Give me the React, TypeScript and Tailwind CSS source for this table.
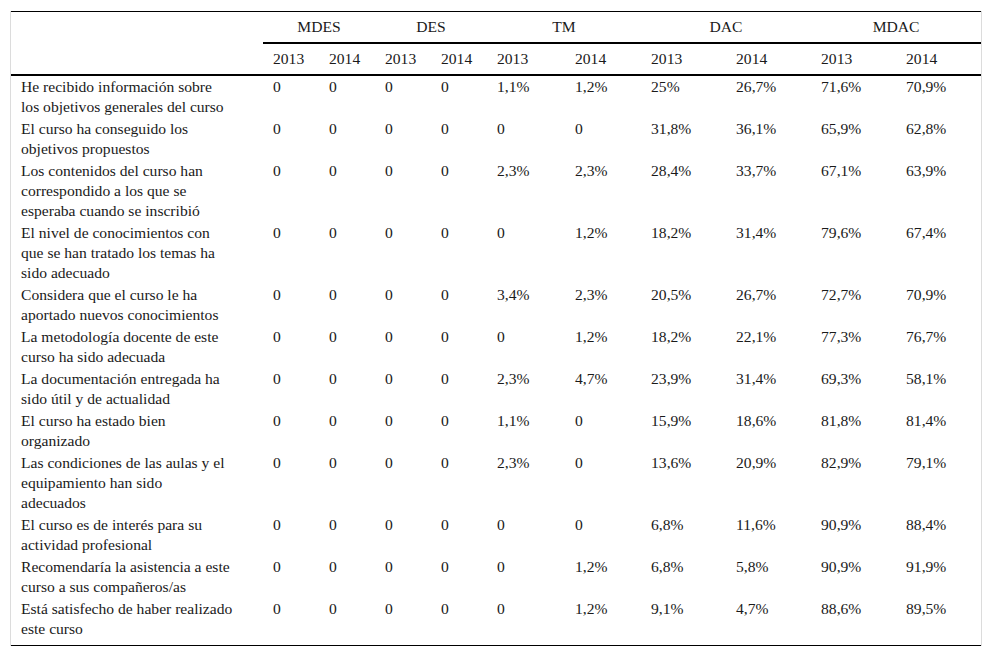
import React from "react";

const groups = ["MDES", "DES", "TM", "DAC", "MDAC"];

const rows: { label: string[]; v: string[] }[] = [
  { label: ["He recibido información sobre", "los objetivos generales del curso"], v: ["0", "0", "0", "0", "1,1%", "1,2%", "25%", "26,7%", "71,6%", "70,9%"] },
  { label: ["El curso ha conseguido los", "objetivos propuestos"], v: ["0", "0", "0", "0", "0", "0", "31,8%", "36,1%", "65,9%", "62,8%"] },
  { label: ["Los contenidos del curso han", "correspondido a los que se", "esperaba cuando se inscribió"], v: ["0", "0", "0", "0", "2,3%", "2,3%", "28,4%", "33,7%", "67,1%", "63,9%"] },
  { label: ["El nivel de conocimientos con", "que se han tratado los temas ha", "sido adecuado"], v: ["0", "0", "0", "0", "0", "1,2%", "18,2%", "31,4%", "79,6%", "67,4%"] },
  { label: ["Considera que el curso le ha", "aportado nuevos conocimientos"], v: ["0", "0", "0", "0", "3,4%", "2,3%", "20,5%", "26,7%", "72,7%", "70,9%"] },
  { label: ["La metodología docente de este", "curso ha sido adecuada"], v: ["0", "0", "0", "0", "0", "1,2%", "18,2%", "22,1%", "77,3%", "76,7%"] },
  { label: ["La documentación entregada ha", "sido útil y de actualidad"], v: ["0", "0", "0", "0", "2,3%", "4,7%", "23,9%", "31,4%", "69,3%", "58,1%"] },
  { label: ["El curso ha estado bien", "organizado"], v: ["0", "0", "0", "0", "1,1%", "0", "15,9%", "18,6%", "81,8%", "81,4%"] },
  { label: ["Las condiciones de las aulas y el", "equipamiento han sido", "adecuados"], v: ["0", "0", "0", "0", "2,3%", "0", "13,6%", "20,9%", "82,9%", "79,1%"] },
  { label: ["El curso es de interés para su", "actividad profesional"], v: ["0", "0", "0", "0", "0", "0", "6,8%", "11,6%", "90,9%", "88,4%"] },
  { label: ["Recomendaría la asistencia a este", "curso a sus compañeros/as"], v: ["0", "0", "0", "0", "0", "1,2%", "6,8%", "5,8%", "90,9%", "91,9%"] },
  { label: ["Está satisfecho de haber realizado", "este curso"], v: ["0", "0", "0", "0", "0", "1,2%", "9,1%", "4,7%", "88,6%", "89,5%"] },
];

export default function App() {
  return (
    <div className="bg-white w-[992px] h-[657px] pt-[11px] pl-[10px] text-[#1a1a1a] font-['Liberation_Serif','Times_New_Roman',serif] text-[15.6px] leading-[20px]">
      <div className="w-[972px] border-x border-[#dcdcdc]">
        <table className="w-[970px] table-fixed border-separate border-spacing-0 border-t border-black">
          <colgroup>
            <col className="w-[252px]" />
            <col className="w-[56px]" />
            <col className="w-[56px]" />
            <col className="w-[56px]" />
            <col className="w-[56px]" />
            <col className="w-[78px]" />
            <col className="w-[76px]" />
            <col className="w-[85px]" />
            <col className="w-[85px]" />
            <col className="w-[85px]" />
            <col className="w-[85px]" />
          </colgroup>
          <thead>
            <tr>
              <th rowSpan={2} className="border-b-2 border-black p-0" />
              {groups.map((g) => (
                <th key={g} colSpan={2} className="h-[32px] border-b-2 border-black font-normal text-center align-middle py-[5px] px-0">
                  {g}
                </th>
              ))}
            </tr>
            <tr>
              {groups.map((g) => (
                <React.Fragment key={g}>
                  <th className="h-[32px] border-b-2 border-black font-normal text-left pl-[10px] py-[5px]">2013</th>
                  <th className="h-[32px] border-b-2 border-black font-normal text-left pl-[10px] py-[5px]">2014</th>
                </React.Fragment>
              ))}
            </tr>
          </thead>
          <tbody>
            {rows.map((r, i) => {
              const last = i === rows.length - 1;
              return (
                <tr key={i}>
                  <td className={`align-top pl-[10px] pt-[1px] whitespace-nowrap ${last ? "pb-[6px] border-b border-black" : "pb-[1px]"}`}>
                    {r.label.map((l, j) => (
                      <div key={j}>{l}</div>
                    ))}
                  </td>
                  {r.v.map((v, j) => (
                    <td key={j} className={`align-top pl-[10px] pt-[1px] whitespace-nowrap ${last ? "pb-[6px] border-b border-black" : "pb-[1px]"}`}>
                      {v}
                    </td>
                  ))}
                </tr>
              );
            })}
          </tbody>
        </table>
      </div>
    </div>
  );
}
